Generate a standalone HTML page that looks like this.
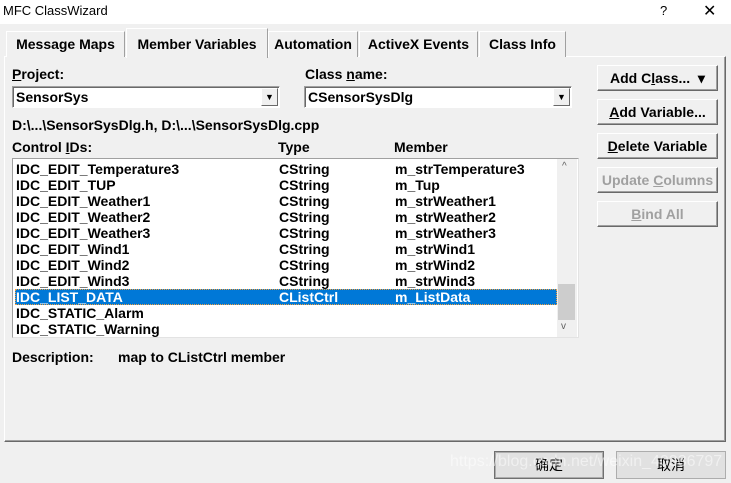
<!DOCTYPE html><html><head><style>
*{margin:0;padding:0;box-sizing:border-box}
body{width:731px;height:483px;background:#f0f0f0;font-family:"Liberation Sans",sans-serif;font-size:14px;position:relative;overflow:hidden;color:#000}
.a{position:absolute;white-space:nowrap}
.b{font-weight:bold}
.tab{position:absolute;top:31px;height:26px;border:1px solid #fff;border-right:1px solid #a0a0a0;border-bottom:none;font-weight:bold;text-align:center;line-height:24px;background:#f0f0f0}
.btn{position:absolute;left:597px;width:121px;height:26px;background:#f0f0f0;border:1px solid;border-color:#fff #696969 #696969 #fff;box-shadow:inset -1px -1px 0 #a0a0a0;font-weight:bold;text-align:center;line-height:24px}
.dis{color:#a0a0a0}
.combo{position:absolute;height:22px;background:#fff;border:1px solid;border-color:#a0a0a0 #fff #fff #a0a0a0;box-shadow:inset 1px 1px 0 #696969;font-weight:bold;padding-left:3px;line-height:20px}
.dd{position:absolute;right:1px;top:1px;width:17px;height:18px;background:#f0f0f0;border:1px solid;border-color:#fff #696969 #696969 #fff;font-size:9px;text-align:center;line-height:16px}
.row{position:absolute;left:2px;width:542px;height:16px;line-height:16px;font-weight:bold}
.row span{position:absolute}
u{text-decoration:underline}
</style></head><body>
<div class="a" style="left:0;top:0;width:731px;height:24px;background:#fff"></div>
<div class="a" style="left:3px;top:3px;font-size:13px">MFC ClassWizard</div>
<div class="a" style="left:660px;top:3px;font-size:13px">?</div>
<div class="a" style="left:703px;top:1px;font-size:16px">✕</div>
<div class="a" style="left:4px;top:56px;width:722px;height:386px;border:1px solid;border-color:#fff #696969 #696969 #fff;box-shadow:inset -1px -1px 0 #a0a0a0"></div>
<div class="tab" style="left:6px;width:119px">Message Maps</div>
<div class="tab" style="left:268px;width:90px">Automation</div>
<div class="tab" style="left:359px;width:119px">ActiveX Events</div>
<div class="tab" style="left:479px;width:87px">Class Info</div>
<div class="tab" style="left:126px;top:28px;width:142px;height:30px;line-height:30px">Member Variables</div>
<div class="a b" style="left:12px;top:66px"><u>P</u>roject:</div>
<div class="a b" style="left:305px;top:66px">Class <u>n</u>ame:</div>
<div class="combo" style="left:12px;top:86px;width:268px">SensorSys<div class="dd">▼</div></div>
<div class="combo" style="left:304px;top:86px;width:268px">CSensorSysDlg<div class="dd">▼</div></div>
<div class="a b" style="left:12px;top:117px">D:\...\SensorSysDlg.h, D:\...\SensorSysDlg.cpp</div>
<div class="a b" style="left:12px;top:139px">Control <u>I</u>Ds:</div>
<div class="a b" style="left:278px;top:139px">Type</div>
<div class="a b" style="left:394px;top:139px">Member</div>
<div class="a" style="left:12px;top:158px;width:567px;height:180px;background:#fff;border:1px solid;border-color:#a0a0a0 #e3e3e3 #e3e3e3 #a0a0a0">
<div class="row" style="top:2px"><span style="left:1px">IDC_EDIT_Temperature3</span><span style="left:264px">CString</span><span style="left:380px">m_strTemperature3</span></div>
<div class="row" style="top:18px"><span style="left:1px">IDC_EDIT_TUP</span><span style="left:264px">CString</span><span style="left:380px">m_Tup</span></div>
<div class="row" style="top:34px"><span style="left:1px">IDC_EDIT_Weather1</span><span style="left:264px">CString</span><span style="left:380px">m_strWeather1</span></div>
<div class="row" style="top:50px"><span style="left:1px">IDC_EDIT_Weather2</span><span style="left:264px">CString</span><span style="left:380px">m_strWeather2</span></div>
<div class="row" style="top:66px"><span style="left:1px">IDC_EDIT_Weather3</span><span style="left:264px">CString</span><span style="left:380px">m_strWeather3</span></div>
<div class="row" style="top:82px"><span style="left:1px">IDC_EDIT_Wind1</span><span style="left:264px">CString</span><span style="left:380px">m_strWind1</span></div>
<div class="row" style="top:98px"><span style="left:1px">IDC_EDIT_Wind2</span><span style="left:264px">CString</span><span style="left:380px">m_strWind2</span></div>
<div class="row" style="top:114px"><span style="left:1px">IDC_EDIT_Wind3</span><span style="left:264px">CString</span><span style="left:380px">m_strWind3</span></div>
<div class="row" style="top:130px;background:#0078d7;color:#fff;outline:1px dotted #f0a040;outline-offset:-1px"><span style="left:1px">IDC_LIST_DATA</span><span style="left:264px">CListCtrl</span><span style="left:380px">m_ListData</span></div>
<div class="row" style="top:146px"><span style="left:1px">IDC_STATIC_Alarm</span></div>
<div class="row" style="top:162px"><span style="left:1px">IDC_STATIC_Warning</span></div>
<div class="a" style="left:544px;top:0;width:20px;height:178px;background:#f0f0f0"></div>
<div class="a" style="left:545px;top:125px;width:17px;height:36px;background:#cdcdcd"></div>
<div class="a" style="left:549px;top:2px;font-size:10px;color:#606060">^</div>
<div class="a" style="left:548px;top:162px;font-size:10px;color:#606060">v</div>
</div>
<div class="a b" style="left:12px;top:349px">Description:</div>
<div class="a b" style="left:118px;top:349px">map to CListCtrl member</div>
<div class="btn" style="top:65px">Add C<u>l</u>ass... &nbsp;▾</div>
<div class="btn" style="top:99px"><u>A</u>dd Variable...</div>
<div class="btn" style="top:133px"><u>D</u>elete Variable</div>
<div class="btn dis" style="top:167px">Update <u>C</u>olumns</div>
<div class="btn dis" style="top:201px"><u>B</u>ind All</div>
<div class="a" style="left:494px;top:451px;width:110px;height:28px;border:1px solid #707070;box-shadow:inset 0 0 0 1px #adadad;background:#e1e1e1;text-align:center;line-height:26px;font-family:'Liberation Sans','Noto Sans CJK SC',sans-serif;font-size:14px">确定</div>
<div class="a" style="left:616px;top:451px;width:110px;height:28px;border:1px solid #adadad;background:#e1e1e1;text-align:center;line-height:26px;font-family:'Liberation Sans','Noto Sans CJK SC',sans-serif;font-size:14px">取消</div>
<div class="a" style="left:450px;top:453px;font-size:16px;color:rgba(255,255,255,0.5)">https://blog.csdn.net/weixin_40386797</div>
</body></html>
